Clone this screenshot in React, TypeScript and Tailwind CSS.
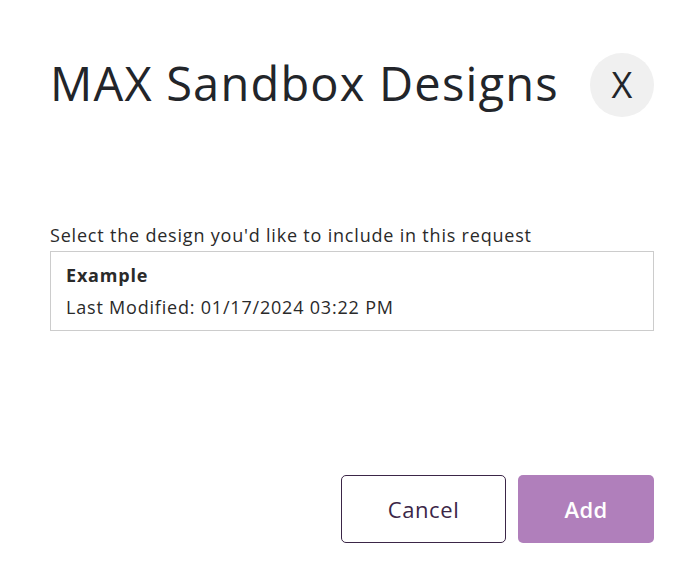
export default function App() {
  return (
    <div className="min-h-screen bg-white" style={{ fontFamily: '"Open Sans", Lato, sans-serif' }}>
      <div className="w-[685px] pl-[50px] pr-[31px] pt-[53px] pb-[34px] text-[#212529]">
        <div className="flex items-center justify-between">
          <h1 className="text-[47px] leading-[64px] font-normal tracking-[1.2px] text-[#22252a] -mt-[4px]">
            MAX Sandbox Designs
          </h1>
          <button className="w-[64px] h-[64px] rounded-full bg-[#f0f0f0] text-[36px] leading-none text-[#22252a] flex items-center justify-center">
            X
          </button>
        </div>

        <p className="mt-[107px] text-[18px] leading-[22px] tracking-[0.8px] text-[#2a2a2a]">
          Select the design you'd like to include in this request
        </p>
        <div className="mt-[5px] border border-[#cccccc] px-[15px] pt-[11px] pb-[11px] tracking-[0.8px]">
          <div className="text-[18px] leading-[24px] font-bold text-[#2a2a2a]">Example</div>
          <div className="mt-[8px] text-[18px] leading-[24px] text-[#2a2a2a]">
            Last Modified: 01/17/2024 03:22 PM
          </div>
        </div>

        <div className="mt-[144px] flex justify-end gap-[12px]">
          <button className="w-[165px] h-[68px] rounded-[5px] border border-[#3b2647] bg-white text-[22px] tracking-[0.6px] text-[#3b2647]">
            Cancel
          </button>
          <button className="w-[136px] h-[68px] rounded-[5px] bg-[#b07fbb] text-[22px] font-semibold tracking-[0.3px] text-white">
            Add
          </button>
        </div>
      </div>
    </div>
  );
}
